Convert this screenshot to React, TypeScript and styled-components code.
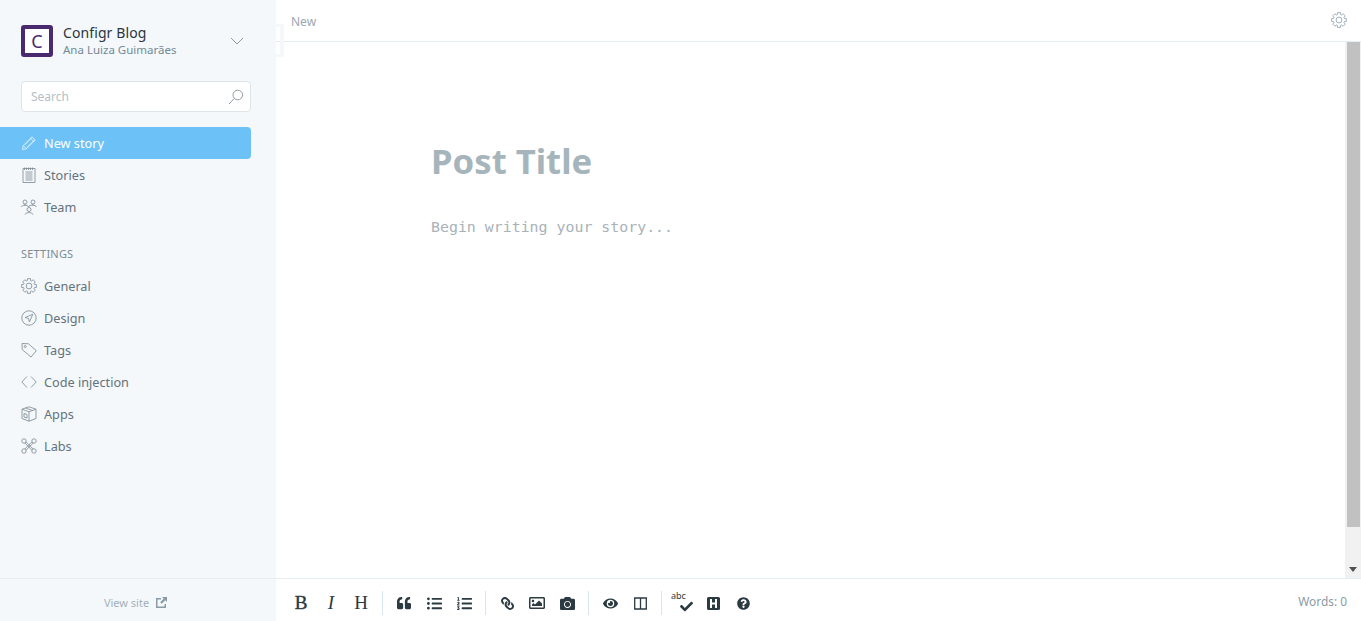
import React from "react";
import styled, { createGlobalStyle } from "styled-components";
import {
  FaCamera,
  FaCheck,
  FaEye,
  FaListOl,
  FaListUl,
  FaQuestionCircle,
  FaQuoteLeft,
  FaRegImage,
  FaLink,
} from "react-icons/fa";

const GlobalStyle = createGlobalStyle`
  html, body { margin: 0; height: 100%; overflow: hidden; }
  body {
    font-family: "Noto Sans", "Open Sans", sans-serif;
    background: #fff;
    color: #3c4a52;
  }
  #root { height: 100%; }
`;

const Line = ({ children, size = 16 }: { children: React.ReactNode; size?: number }) => (
  <svg width={size} height={size} viewBox="0 0 16 16" fill="none" stroke="currentColor" strokeWidth="0.85">
    {children}
  </svg>
);

// gear outline with eight teeth, same drawing for the sidebar and the top bar
const gearPath = () => {
  const points: string[] = [];
  for (let i = 0; i < 8; i++) {
    const mid = (i * Math.PI) / 4;
    const at = (r: number, a: number) =>
      `${(8 + r * Math.cos(a)).toFixed(2)} ${(8 + r * Math.sin(a)).toFixed(2)}`;
    points.push(at(5.6, mid - 0.3), at(7.5, mid - 0.2), at(7.5, mid + 0.2), at(5.6, mid + 0.3));
  }
  return `M${points.join("L")}Z`;
};

const PenIcon = () => (
  <Line>
    <path d="M1.500 14.500l.8-4L11 1.800l3.200 3.200-8.700 8.700zM2.300 10.500l3.200 3.200M9.600 3.200l3.200 3.200" />
    <path d="M4 10l6.500-6.500M6 12l6.500-6.500" strokeWidth="0.5" />
  </Line>
);
const StoriesIcon = () => (
  <Line>
    <path d="M2 1.500h12v14H2zM4.500 5h7M4.500 7h7M4.500 9h7M4.500 11h7M4.500 13h7M3.500.5v2.500M5.500.5v2.500M7.500.5v2.500M9.500.5v2.500M11.500.5v2.500" />
  </Line>
);
const TeamIcon = () => (
  <Line>
    <circle cx="4" cy="3" r="2" />
    <circle cx="12" cy="3" r="2" />
    <circle cx="8" cy="10.500" r="2" />
    <path d="M.5 8c.3-2.500 6.500-2.500 7 0 .5-2.500 7-2.500 8 0M4 15.500c.5-2.500 7.500-2.500 8 0M4 5v2M12 5v2" />
  </Line>
);
const GearIcon = () => (
  <Line>
    <circle cx="8" cy="8" r="2.900" />
    <path d={gearPath()} />
  </Line>
);
const DesignIcon = () => (
  <Line>
    <circle cx="8" cy="8" r="7.200" />
    <path d="M11.800 4.200L4 7.600l3.500.9.900 3.500z" />
  </Line>
);
const TagIcon = () => (
  <Line>
    <path d="M1 1.500l6.500.3 7.800 6.900-5.200 6.300L1.200 7.600z" />
    <circle cx="4.200" cy="4.500" r="1" />
  </Line>
);
const CodeIcon = () => (
  <Line>
    <path d="M6 2.500L.8 8 6 13.500M10 2.500L15.200 8 10 13.500" />
  </Line>
);
const AppsIcon = () => (
  <Line>
    <path d="M8 .8l7 2.400v9.300l-7 2.700-7-2.700V3.200zM1 3.200l7 2.600 7-2.600M8 5.800v9.400M4.500 2l7 2.500M3 7.500l3 1v3.500l-3-1z" />
  </Line>
);
const LabsIcon = () => (
  <Line>
    <circle cx="3" cy="3" r="2.200" />
    <circle cx="13" cy="3" r="2.200" />
    <circle cx="3" cy="13" r="2.200" />
    <circle cx="13" cy="13" r="2.200" />
    <path d="M3.800 5L11 12.200M5 3.800l7.200 7.200M12.200 5L5 12.200M11 3.800L3.800 11" />
  </Line>
);
const SearchIcon = () => (
  <Line>
    <circle cx="9.800" cy="6" r="4.800" />
    <path d="M6.300 9.500L1 15" />
  </Line>
);
const ChevronIcon = () => (
  <svg width="14" height="8" viewBox="0 0 14 8" fill="none" stroke="#7d8b93" strokeWidth="0.9">
    <path d="M1 1l6 6 6-6" />
  </svg>
);
const ExternalIcon = () => (
  <svg width="11" height="11" viewBox="0 0 11 11">
    <path d="M0 1h5v1.500H1.500v7h7V7H10v4H0z" fill="#8a9ba5" />
    <path d="M6 0h5v5L9.300 3.300 5.800 6.800 4.200 5.200l3.500-3.500z" fill="#8a9ba5" />
  </svg>
);
const SaveIcon = () => (
  <svg width="13" height="13" viewBox="0 0 13 13">
    <path
      fillRule="evenodd"
      fill="#2c3a42"
      d="M1.500 0h10A1.500 1.500 0 0 1 13 1.500v10a1.500 1.500 0 0 1-1.500 1.500h-10A1.500 1.500 0 0 1 0 11.500v-10A1.500 1.500 0 0 1 1.500 0zM3 2v9h2V7.500h3V11h2V2H8v3.500H5V2z"
    />
  </svg>
);
const ColumnsIcon = () => (
  <svg width="13" height="13" viewBox="0 0 13 13" fill="none" stroke="#2c3a42" strokeWidth="1.300">
    <path d="M.7 1h11.600v11H.7zM6.500 1v11" />
  </svg>
);

const Shell = styled.div`
  display: flex;
  height: 621px;
`;

const Sidebar = styled.aside`
  width: 276px;
  flex: none;
  display: flex;
  flex-direction: column;
  background: #f4f8fb;
`;

const SidebarBody = styled.div`
  flex: 1;
  padding-top: 24px;
`;

const Brand = styled.div`
  display: flex;
  align-items: center;
  height: 33px;
  padding: 0 32px 0 21px;
`;

const Logo = styled.div`
  width: 32px;
  height: 32px;
  box-sizing: border-box;
  border: 4px solid #4a2a6e;
  border-radius: 3px;
  background: #fff;
  color: #4a2a6e;
  font-size: 18px;
  line-height: 24px;
  text-align: center;
`;

const BrandText = styled.div`
  flex: 1;
  margin-left: 10px;
`;

const BrandName = styled.div`
  font-size: 14px;
  line-height: 18px;
  letter-spacing: 0.1px;
  color: #2a353c;
`;

const BrandUser = styled.div`
  font-size: 11.500px;
  line-height: 15px;
  color: #738a97;
`;

const SearchBox = styled.div`
  display: flex;
  align-items: center;
  justify-content: space-between;
  box-sizing: border-box;
  width: 230px;
  height: 31px;
  margin: 24px 0 15px 21px;
  padding: 0 6px 0 9px;
  background: #fff;
  border: 1px solid #dfe4e8;
  border-radius: 4px;
  font-size: 12px;
  color: #b3bfc6;
`;

const IconSlot = styled.span`
  display: flex;
  color: #808d95;
`;

const NavItem = styled.div<{ $active?: boolean }>`
  display: flex;
  align-items: center;
  gap: 7px;
  box-sizing: border-box;
  width: 251px;
  height: 32px;
  padding-left: 21px;
  border-radius: 0 4px 4px 0;
  font-size: 12.700px;
  color: ${(p) => (p.$active ? "#fff" : "#64727b")};
  background: ${(p) => (p.$active ? "#6cc2f7" : "transparent")};

  ${IconSlot} {
    width: 16px;
    color: ${(p) => (p.$active ? "#e8f5fd" : "#808d95")};
  }
`;

const SectionLabel = styled.div`
  margin: 23px 0 9px 21px;
  font-size: 11px;
  line-height: 15px;
  letter-spacing: 0.2px;
  color: #7d8b93;
`;

const SidebarFooter = styled.div`
  height: 43px;
  box-sizing: border-box;
  border-top: 1px solid #e6edf2;
  display: flex;
  align-items: center;
  justify-content: center;
  gap: 7px;
  padding: 4px 5px 0 0;
  font-size: 11px;
  color: #a3b1b9;
`;

const Main = styled.main`
  flex: 1;
  min-width: 0;
  display: flex;
  flex-direction: column;
  position: relative;
`;

const Ghost = styled.div`
  position: absolute;
  left: 0;
  top: 24px;
  width: 8px;
  height: 33px;
  box-sizing: border-box;
  border: solid #f4f8fb;
  border-width: 3px 4px 3px 0;
  border-radius: 0 3px 3px 0;
`;

const TopBar = styled.header`
  height: 42px;
  box-sizing: border-box;
  flex: none;
  display: flex;
  align-items: center;
  justify-content: space-between;
  padding: 1px 14px 0 15px;
  border-bottom: 1px solid #e6edf2;
  font-size: 12px;
  color: #9aa8b1;

  ${IconSlot} {
    margin-top: -2px;
    color: #8fa3af;
  }
`;

const EditorRow = styled.div`
  flex: 1;
  min-height: 0;
  display: flex;
`;

const Editor = styled.div`
  flex: 1;
  padding: 94px 0 0 155px;
`;

const PostTitle = styled.h1`
  margin: 0;
  font-size: 34.700px;
  line-height: 50px;
  font-weight: 700;
  color: #a6b5bc;
`;

const Placeholder = styled.div`
  margin-top: 31px;
  font-family: "DejaVu Sans Mono", "Liberation Mono", monospace;
  font-size: 14.900px;
  line-height: 20px;
  color: #a9b2b8;
`;

const ScrollTrack = styled.div`
  width: 16px;
  flex: none;
  display: flex;
  flex-direction: column;
  background: #f1f1f1;
`;

const ScrollThumb = styled.div`
  height: 485px;
  margin: 0 1px 0 2px;
  background: #c1c1c1;
`;

const ScrollArrow = styled.div`
  margin: auto auto 6px;
  border: 4px solid transparent;
  border-top: 5px solid #505050;
  border-bottom: 0;
`;

const Toolbar = styled.footer`
  height: 43px;
  box-sizing: border-box;
  flex: none;
  display: flex;
  align-items: center;
  padding: 6px 14px 0 10px;
  border-top: 1px solid #e6edf2;
  color: #2c3a42;
`;

const ToolGroup = styled.div`
  display: flex;
  height: 24px;
  padding-right: 6px;
  margin-right: 6px;
  border-right: 1px solid #d8e6ef;

  &:last-of-type {
    border-right: 0;
  }
`;

const Tool = styled.span<{ $italic?: boolean }>`
  position: relative;
  width: 30px;
  display: flex;
  align-items: center;
  justify-content: center;
  font-family: "Liberation Serif", serif;
  font-size: 19px;
  font-style: ${(p) => (p.$italic ? "italic" : "normal")};
`;

const HeavyLetter = styled.span`
  -webkit-text-stroke: 0.4px currentColor;
`;

const MirroredLink = styled(FaLink)`
  transform: scaleX(-1);
`;

const SpellCheck = styled(FaCheck)`
  margin: 7px 0 0 6px;
`;

const SpellLabel = styled.span`
  position: absolute;
  left: 3px;
  top: 0;
  font-family: "Noto Sans", sans-serif;
  font-size: 9px;
  line-height: 10px;
`;

const WordCount = styled.span`
  margin: 0 0 4px auto;
  font-size: 11.900px;
  color: #8a9ba5;
`;

const topItems = [
  { label: "New story", icon: <PenIcon />, active: true },
  { label: "Stories", icon: <StoriesIcon /> },
  { label: "Team", icon: <TeamIcon /> },
];

const settingsItems = [
  { label: "General", icon: <GearIcon /> },
  { label: "Design", icon: <DesignIcon /> },
  { label: "Tags", icon: <TagIcon /> },
  { label: "Code injection", icon: <CodeIcon /> },
  { label: "Apps", icon: <AppsIcon /> },
  { label: "Labs", icon: <LabsIcon /> },
];

const renderItem = (item: { label: string; icon: React.ReactNode; active?: boolean }) => (
  <NavItem key={item.label} $active={item.active}>
    <IconSlot>{item.icon}</IconSlot>
    {item.label}
  </NavItem>
);

export default function App() {
  return (
    <Shell>
      <GlobalStyle />
      <Sidebar>
        <SidebarBody>
          <Brand>
            <Logo>C</Logo>
            <BrandText>
              <BrandName>Configr Blog</BrandName>
              <BrandUser>Ana Luiza Guimarães</BrandUser>
            </BrandText>
            <ChevronIcon />
          </Brand>
          <SearchBox>
            Search
            <IconSlot>
              <SearchIcon />
            </IconSlot>
          </SearchBox>
          {topItems.map(renderItem)}
          <SectionLabel>SETTINGS</SectionLabel>
          {settingsItems.map(renderItem)}
        </SidebarBody>
        <SidebarFooter>
          View site
          <ExternalIcon />
        </SidebarFooter>
      </Sidebar>
      <Main>
        <Ghost />
        <TopBar>
          New
          <IconSlot>
            <GearIcon />
          </IconSlot>
        </TopBar>
        <EditorRow>
          <Editor>
            <PostTitle>Post Title</PostTitle>
            <Placeholder>Begin writing your story...</Placeholder>
          </Editor>
          <ScrollTrack>
            <ScrollThumb />
            <ScrollArrow />
          </ScrollTrack>
        </EditorRow>
        <Toolbar>
          <ToolGroup>
            <Tool><HeavyLetter>B</HeavyLetter></Tool>
            <Tool $italic>I</Tool>
            <Tool>H</Tool>
          </ToolGroup>
          <ToolGroup>
            <Tool><FaQuoteLeft size={14} /></Tool>
            <Tool><FaListUl size={15} /></Tool>
            <Tool><FaListOl size={15} /></Tool>
          </ToolGroup>
          <ToolGroup>
            <Tool><MirroredLink size={13} /></Tool>
            <Tool><FaRegImage size={16} /></Tool>
            <Tool><FaCamera size={15} /></Tool>
          </ToolGroup>
          <ToolGroup>
            <Tool><FaEye size={15} /></Tool>
            <Tool><ColumnsIcon /></Tool>
          </ToolGroup>
          <ToolGroup>
            <Tool>
              <SpellLabel>abc</SpellLabel>
              <SpellCheck size={13} />
            </Tool>
            <Tool><SaveIcon /></Tool>
            <Tool><FaQuestionCircle size={13} /></Tool>
          </ToolGroup>
          <WordCount>Words: 0</WordCount>
        </Toolbar>
      </Main>
    </Shell>
  );
}
